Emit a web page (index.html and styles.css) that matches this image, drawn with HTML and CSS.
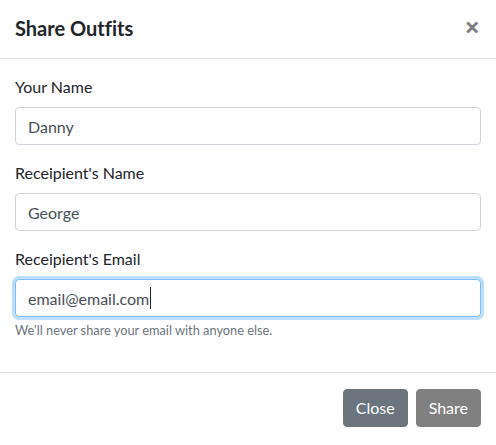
FILE: index.html
```html
<!DOCTYPE html>
<html lang="en">
<head>
<meta charset="utf-8">
<title>Share Outfits</title>
<link rel="stylesheet" href="styles.css">
</head>
<body>
<div class="modal">
  <div class="modal-header">
    <h5 class="modal-title">Share Outfits</h5>
    <button type="button" class="close" aria-label="Close">&times;</button>
  </div>
  <div class="modal-body">
    <div class="form-group">
      <label class="label">Your Name</label>
      <input class="form-control" type="text" value="Danny">
    </div>
    <div class="form-group">
      <label class="label">Receipient's Name</label>
      <input class="form-control" type="text" value="George">
    </div>
    <div class="form-group">
      <label class="label">Receipient's Email</label>
      <div class="field">
        <input class="form-control focused" type="email" value="email@email.com">
        <span class="caret"></span>
      </div>
      <small class="form-text">We'll never share your email with anyone else.</small>
    </div>
  </div>
  <div class="modal-footer">
    <button type="button" class="btn btn-secondary">Close</button>
    <button type="button" class="btn btn-share">Share</button>
  </div>
</div>
</body>
</html>
```
FILE: styles.css
```css
* { box-sizing: border-box; }
html, body { margin: 0; padding: 0; background: #fff; }
body {
  font-family: "Lato", "Open Sans", sans-serif;
  font-size: 16px;
  line-height: 1.5;
  color: #212529;
  font-variant-ligatures: none;
}
.modal { width: 496px; height: 445px; background: #fff; }
.modal-header {
  display: flex;
  align-items: center;
  justify-content: space-between;
  height: 59px;
  padding: 0 15px;
  border-bottom: 1px solid #dee2e6;
}
.modal-title {
  margin: 0;
  font-size: 20px;
  font-weight: 700;
  line-height: 30px;
  padding-bottom: 2px;
}
.close {
  border: 0;
  background: transparent;
  padding: 0;
  font-family: "Open Sans", sans-serif;
  font-size: 27px;
  font-weight: 700;
  line-height: 1;
  color: #000;
  opacity: .5;
  text-shadow: 0 1px 0 #fff;
  margin-right: 1px;
  margin-bottom: 6px;
}
.modal-body { padding: 16px 15px; }
.form-group { margin-bottom: 16px; }
.label { display: block; margin-bottom: 8px; line-height: 24px; }
.field { position: relative; }
.form-control {
  display: block;
  width: 100%;
  height: 38px;
  padding: 6px 12px;
  font-family: inherit;
  font-size: 16px;
  line-height: 1.5;
  color: #495057;
  background: #fff;
  border: 1px solid #ced4da;
  border-radius: 4px;
  outline: none;
  font-variant-ligatures: none;
}
.form-control.focused {
  border-color: #80bdff;
  box-shadow: 0 0 0 3px rgba(0, 123, 255, .25);
}
.caret {
  position: absolute;
  left: 135px;
  top: 8px;
  width: 1px;
  height: 22px;
  background: #212529;
}
.form-text {
  display: block;
  margin-top: 4px;
  font-size: 12.8px;
  line-height: 19.2px;
  color: #6c757d;
}
.modal-footer {
  display: flex;
  justify-content: flex-end;
  gap: 8px;
  padding: 16px 15px;
  border-top: 1px solid #dee2e6;
}
.btn {
  height: 38px;
  padding: 6px 12px;
  font-family: inherit;
  font-size: 16px;
  line-height: 1.5;
  color: #fff;
  border: 1px solid transparent;
  border-radius: 4px;
}
.btn-secondary { background: #6c757d; border-color: #6c757d; }
.btn-share { background: #808080; border-color: #808080; }
```
